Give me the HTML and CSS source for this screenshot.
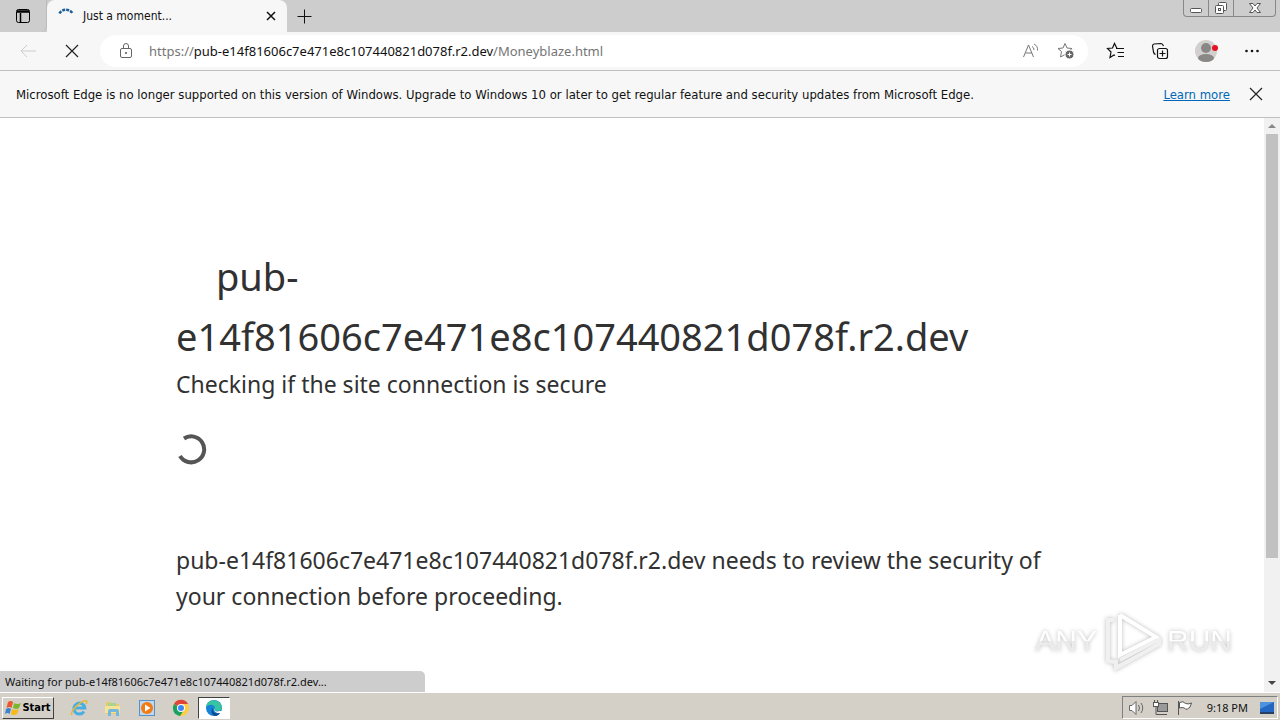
FILE: index.html
```
<!DOCTYPE html>
<html lang="en">
    <head>
        <meta charset="utf-8">
        <title>Just a moment...</title>
        <meta name="viewport" content="width=device-width, initial-scale=1.0">
        <link rel="stylesheet" href="styles.css">
    </head>
    <body>
        <header class="titlebar">
            <button class="tab-actions" aria-label="Tab actions">
                <svg width="16" height="16" viewBox="0 0 16 16" fill="none" stroke="#000"><rect x="1.5" y="1.5" width="13" height="13" rx="2"/><path d="M2 3h12M2 4h12M5.5 5v9" stroke-width="1.5"/></svg>
            </button>
            <div class="tab">
                <svg class="tab-spinner" width="16" height="16" viewBox="0 0 16 16" fill="none" stroke="#1b5e9b" stroke-width="2.5"><path d="M1.500 5.500a7 6 0 0 1 13 0" stroke-dasharray="3 1"/></svg>
                <span class="tab-title">Just a moment...</span>
                <button aria-label="Close tab"><svg width="16" height="16" viewBox="0 0 16 16" stroke="#111" stroke-width="1.500"><path d="M4 4l8 8M12 4l-8 8"/></svg></button>
            </div>
            <button class="new-tab" aria-label="New tab"><svg width="16" height="16" viewBox="0 0 16 16" stroke="#111"><path d="M8.500 1.500v14M1.500 8.500h14"/></svg></button>
            <div class="window-buttons">
                <button aria-label="Minimize"><svg width="14" height="14" viewBox="0 0 14 14" fill="#fff" stroke="#555"><rect x="1.500" y="7.500" width="11" height="4" rx="1"/></svg></button>
                <button aria-label="Restore"><svg width="14" height="14" viewBox="0 0 14 14" fill="#fff" stroke="#555"><rect x="4.500" y="1.500" width="8" height="8" rx="1"/><rect x="1.500" y="4.500" width="8" height="8" rx="1"/><rect x="4.500" y="7.500" width="2" height="2"/></svg></button>
                <button class="window-close" aria-label="Close"><svg width="14" height="14" viewBox="0 0 14 14" fill="#fff" stroke="#555"><path d="M1.500 2.500h3.500l2 2.500 2-2.500h3.500l-3.500 4.500 3.500 4.500H9L7 9l-2 2.500H1.500L5 7z"/></svg></button>
            </div>
        </header>

        <nav class="toolbar">
            <button aria-label="Back"><svg width="20" height="20" viewBox="0 0 20 20" fill="none" stroke="#ccc"><path d="M18 10H3M9 4l-6 6 6 6"/></svg></button>
            <button class="stop" aria-label="Stop"><svg width="16" height="16" viewBox="0 0 16 16" stroke="#222" stroke-width="1.200"><path d="M2 2l12 12M14 2L2 14"/></svg></button>
            <div class="address">
                <svg width="16" height="18" viewBox="0 0 16 18" fill="none" stroke="#666"><rect x="2.500" y="6.500" width="11" height="9" rx="1.500"/><path d="M5.500 6.500V4a2.500 2.500 0 0 1 5 0v2.500"/><circle cx="8" cy="11" r=".7" fill="#666"/></svg>
                <a class="url" href="#">https://<b>pub-e14f81606c7e471e8c107440821d078f.r2.dev</b>/Moneyblaze.html</a>
                <button aria-label="Read aloud"><svg width="18" height="18" viewBox="0 0 18 18" fill="none" stroke="#777"><path d="M1.500 15L6.500 3l5 12M3.500 11h6.500M10 4.500q2 1 2 3.500M12 2q4 2 3.500 6.500"/></svg></button>
                <button aria-label="Add to favorites"><svg width="20" height="20" viewBox="0 0 20 20" fill="none" stroke="#777"><path d="M9 2.500l2 4.500 5 .5-4 3.500 1 5-4-2.500L4.500 16l1-5.500L2 7.500 7 7z"/><circle cx="13.500" cy="13.500" r="4.500" fill="#666" stroke="#fff"/><path d="M11.500 13.500h4M13.500 11.500v4" stroke="#fff"/></svg></button>
            </div>
            <div class="tools">
                <button aria-label="Favorites"><svg width="20" height="20" viewBox="0 0 20 20" fill="none" stroke="#111" stroke-width="1.200"><path d="M11 7.500L8.500 2.500 6.500 7l-5 .5L5 11l-1 5.500 4-2.500 1 .5M10 7.500h8M11.500 11.500H18M12 15.500h6"/></svg></button>
                <button aria-label="Collections"><svg width="20" height="20" viewBox="0 0 20 20" fill="none" stroke="#111" stroke-width="1.200"><rect x="7.500" y="7.500" width="10" height="10" rx="2"/><path d="M12.500 9.500v6M9.500 12.500h6M5.500 13.500Q4 13 3.500 11L2.500 5q0-1.500 1.500-2l7-.5q1.500 0 2.500 2.500"/></svg></button>
                <button aria-label="Profile"><svg width="24" height="24" viewBox="0 0 24 24"><circle cx="12" cy="12" r="11" fill="#d2d0ce"/><circle cx="12" cy="9" r="5" fill="#8a8886"/><ellipse cx="12" cy="19" rx="8" ry="4" fill="#8a8886"/><circle cx="21" cy="9" r="3" fill="#e81123"/></svg></button>
                <button aria-label="Settings and more"><svg width="20" height="20" viewBox="0 0 20 20" fill="#111"><circle cx="4.500" cy="10" r="1.300"/><circle cx="10" cy="10" r="1.300"/><circle cx="15.500" cy="10" r="1.300"/></svg></button>
            </div>
        </nav>

        <div class="infobar">
            <span>Microsoft Edge is no longer supported on this version of Windows. Upgrade to Windows 10 or later to get regular feature and security updates from Microsoft Edge.</span>
            <a href="#">Learn more</a>
            <button aria-label="Dismiss"><svg width="16" height="16" viewBox="0 0 16 16" stroke="#222" stroke-width="1.200"><path d="M2 2l12 12M14 2L2 14"/></svg></button>
        </div>

        <div class="viewport">
            <main class="page">
                <div class="content">
                    <h1>pub-<br>e14f81606c7e471e8c107440821d078f.r2.dev</h1>
                    <h2>Checking if the site connection is secure</h2>
                    <svg class="spinner" width="32" height="32" viewBox="0 0 32 32" fill="none" stroke="#555" stroke-width="4"><path d="M8 4.500a13 13 0 1 1-4 17.500"/></svg>
                    <p>pub-e14f81606c7e471e8c107440821d078f.r2.dev needs to review the security of your connection before proceeding.</p>
                </div>
            </main>
            <div class="scrollbar">
                <svg width="16" height="16" viewBox="0 0 16 16"><path d="M4 10l4-4 4 4z" fill="#888"/></svg>
                <div class="track"><div class="thumb"></div></div>
                <svg width="16" height="18" viewBox="0 0 16 18"><path d="M4 7l4 4 4-4z" fill="#444"/></svg>
            </div>
            <div class="status">Waiting for pub-e14f81606c7e471e8c107440821d078f.r2.dev...</div>
            <div class="watermark">
                <span>ANY</span>
                <svg width="60" height="66" viewBox="0 0 60 66" fill="none" stroke="#fff" stroke-width="4"><path d="M18 7v40l36-18L18 7"/><path d="M12 12H6v41l6 1M14 52v8l43-24v-6M18 52l38-20" stroke="#f0f0f0"/></svg>
                <span>RUN</span>
            </div>
        </div>

        <footer class="taskbar">
            <button class="start">
                <svg width="16" height="16" viewBox="0 0 16 16"><path d="M3 2q3-2 5 0L6.500 8q-2-2-5 0z" fill="#e8582b"/><path d="M9 3q3 2 7 0l-2 5q-3 2-6 0z" fill="#7db72f"/><path d="M1 9q3-2 5 0l-1.500 5q-2-2-4.500 0z" fill="#3a83cf"/><path d="M7 9q3 2 7 0l-2 5q-3 2-6 0z" fill="#f9b916"/></svg>
                Start
            </button>
            <div class="apps">
                <button aria-label="Internet Explorer"><svg width="18" height="18" viewBox="0 0 18 18" fill="none"><path d="M14 12.500a5.500 5.500 0 1 1 .8-3.500H4.500" stroke="#49aee0" stroke-width="3"/><path d="M2 16C-1 13 12 0 16.500 2q1 1-.5 3" stroke="#e5b83b" stroke-width="1.500"/></svg></button>
                <button aria-label="Windows Explorer"><svg width="18" height="18" viewBox="0 0 18 18"><path d="M2 3h5l1 2h7v10H2z" fill="#e8ca68"/><path d="M4 4h8v4H4z" fill="#a8d58e"/><path d="M1 7h15v7H1z" fill="#f6e39a"/><path d="M4 17v-5q0-2 2-2h7q2 0 2 2v5h-3v-4H7v4z" fill="#75b8dc"/></svg></button>
                <button aria-label="Media Player"><svg width="18" height="18" viewBox="0 0 18 18"><rect x="1.500" y="1.500" width="15" height="15" fill="#bed9ef" stroke="#5792c4"/><circle cx="9" cy="9" r="6" fill="#f27b12"/><path d="M7 5.500v7L12.500 9z" fill="#fff"/></svg></button>
                <button aria-label="Chrome"><svg width="18" height="18" viewBox="0 0 18 18"><circle cx="9" cy="9" r="8" fill="#ffcd40"/><path d="M9 9L2 5a8 8 0 0 1 14 0H9z" fill="#de4437"/><path d="M2 5a8 8 0 0 0 6 12l4-6-3-2z" fill="#1aa15f"/><circle cx="9" cy="9" r="4" fill="#fff"/><circle cx="9" cy="9" r="3" fill="#4285f4"/></svg></button>
                <button class="active" aria-label="Edge"><svg width="18" height="18" viewBox="0 0 18 18"><circle cx="9" cy="9" r="8" fill="#1683d8"/><path d="M1 8C2 1 10-1 15 4c3 4 2 8-2 8-3 0-4-1-3-3 0-3-5-5-9-1z" fill="#37c5a1"/><path d="M16 13c-4 3-9 1-8-4-3 3-1 8 3 8q3-1 5-4z" fill="#114a8b"/><path d="M10 9c-1 3 1 4 5 3h3l-1 2c-6 1-9-2-7-5z" fill="#fff"/></svg></button>
            </div>
            <div class="tray">
                <svg width="18" height="16" viewBox="0 0 18 16" fill="#fff" stroke="#666"><path d="M1.500 5.500H4l4-4v13l-4-4H1.500z"/><path d="M10.500 5q2 3 0 6M13 3q3.500 5 0 10" fill="none"/></svg>
                <svg width="18" height="16" viewBox="0 0 18 16" fill="#fff" stroke="#555"><rect x="5.500" y="3.500" width="10" height="8" fill="#999"/><path d="M4 6v8.500h11M8 14.500h6" fill="none"/><rect x="1.500" y="2.500" width="5" height="4"/><path d="M2.500 0v3M5.500 0v3"/></svg>
                <svg width="18" height="16" viewBox="0 0 18 16" fill="#fff" stroke="#555"><path d="M2.500 1v14M3.500 2.500q4-2 6 1 3 1 6-.5-1 5-4 6-2 1-3-1-2-1-5 0z"/></svg>
                <time>9:18 PM</time>
                <svg width="16" height="16" viewBox="0 0 16 16"><path d="M1 2h14v10H1z" fill="#2267c2"/><path d="M1 2h14L1 9z" fill="#4f91df"/><path d="M1 12h14v2H1z" fill="#263f66"/></svg>
            </div>
        </footer>
    </body>
</html>
```
FILE: styles.css
```
* {
    box-sizing: border-box;
}

body {
    margin: 0;
    height: 100vh;
    display: flex;
    flex-direction: column;
    overflow: hidden;
    background-color: #fff;
    font-family: "Noto Sans", sans-serif;
    font-size: 12px;
    color: #111;
}

button {
    display: flex;
    align-items: center;
    justify-content: center;
    padding: 0;
    border: none;
    background: none;
    font-family: inherit;
}

svg {
    flex: none;
    display: block;
}

.titlebar {
    display: flex;
    height: 32px;
    background-color: #cdcdcd;
}

.tab-actions {
    width: 47px;
    border-right: 1px solid #bbb;
    border-bottom-right-radius: 6px;
}

.tab {
    display: flex;
    align-items: center;
    gap: 9px;
    width: 240px;
    padding: 0 8px 0 11px;
    background-color: #f7f7f7;
    border-radius: 8px 8px 0 0;
}

.tab-title {
    flex: 1;
    font-family: "DejaVu Sans Condensed", "Noto Sans", sans-serif;
}

.new-tab {
    width: 34px;
}

.window-buttons {
    display: flex;
    height: 17px;
    margin: 0 4px 0 auto;
    border: 1px solid #888;
    border-top: none;
    border-radius: 0 0 4px 4px;
}

.window-buttons button {
    width: 25px;
    border-right: 1px solid #888;
}

.window-buttons .window-close {
    width: 41px;
    border-right: none;
}

.toolbar {
    display: flex;
    align-items: center;
    height: 39px;
    padding: 0 18px;
    background-color: #f7f7f7;
    border-bottom: 1px solid #c0c0c0;
}

.stop {
    margin: 0 20px 0 26px;
}

.address {
    flex: 1;
    display: flex;
    align-items: center;
    gap: 16px;
    height: 32px;
    padding: 0 12px 0 18px;
    border-radius: 16px;
    background-color: #fff;
}

.url {
    flex: 1;
    margin-left: -1px;
    color: #757575;
    font-size: 13px;
    text-decoration: none;
}

.url b {
    color: #111;
    font-weight: normal;
}

.tools {
    display: flex;
    align-items: center;
    gap: 24px;
    margin-left: 18px;
}

.infobar {
    display: flex;
    align-items: center;
    height: 47px;
    padding: 0 16px;
    background-color: #f7f7f7;
    border-bottom: 1px solid #c0c0c0;
    font-family: "DejaVu Sans Condensed", "Noto Sans", sans-serif;
    font-size: 13px;
}

.infobar a {
    margin-left: auto;
    margin-right: 18px;
    color: #0067b8;
}

.viewport {
    position: relative;
    flex: 1;
    display: flex;
    min-height: 0;
}

.page {
    flex: 1;
    overflow: hidden;
    color: #313131;
}

.content {
    max-width: 960px;
    margin: 128px auto 0;
    padding: 0 24px;
}

h1, h2, p {
    margin: 0;
    font-weight: normal;
}

h1 {
    font-size: 38px;
    line-height: 60px;
    text-indent: 40px;
}

h2, p {
    font-size: 23px;
    line-height: 36px;
}

.spinner {
    margin: 32px 0 76px;
}

.scrollbar {
    display: flex;
    flex-direction: column;
    width: 16px;
    background-color: #f1f1f1;
}

.track {
    flex: 1;
}

.thumb {
    height: 78.5%;
    margin: 0 2px;
    background-color: #c1c1c1;
}

.status {
    position: absolute;
    left: 0;
    bottom: 0;
    width: 425px;
    height: 21px;
    padding-left: 5px;
    line-height: 21px;
    font-size: 11px;
    background-color: #cdcdcd;
    border-top-right-radius: 5px;
}

.watermark {
    position: absolute;
    right: 48px;
    bottom: 18px;
    display: flex;
    align-items: center;
    gap: 5px;
    font-family: "Liberation Sans", sans-serif;
    font-size: 30px;
    filter: drop-shadow(0 0 2px #bbb);
}

.watermark span {
    background-image: linear-gradient(#fff 50%, #ececec 50%);
    background-clip: text;
    -webkit-background-clip: text;
    color: transparent;
}

.taskbar {
    display: flex;
    align-items: center;
    height: 28px;
    padding: 2px 2px 0;
    background-color: #d4d0c8;
    border-top: 1px solid #fff;
}

.start {
    gap: 1px;
    width: 52px;
    height: 22px;
    border: 1px solid;
    border-color: #fff #404040 #404040 #fff;
    font-family: "DejaVu Sans Condensed", "Noto Sans", sans-serif;
    font-size: 11px;
    font-weight: bold;
}

.apps {
    display: flex;
    margin-left: 8px;
}

.apps button {
    width: 34px;
    height: 22px;
}

.apps .active {
    width: 32px;
    background-color: #fff;
    border: 1px solid;
    border-color: #404040 #fff #fff #404040;
}

.tray {
    display: flex;
    align-items: center;
    gap: 6px;
    height: 23px;
    margin-left: auto;
    padding: 0 2px 0 5px;
    border: 1px solid;
    border-color: #808080 #fff #fff #808080;
    font-size: 11px;
}

.tray time {
    margin: 0 5px 0 7px;
}
```
